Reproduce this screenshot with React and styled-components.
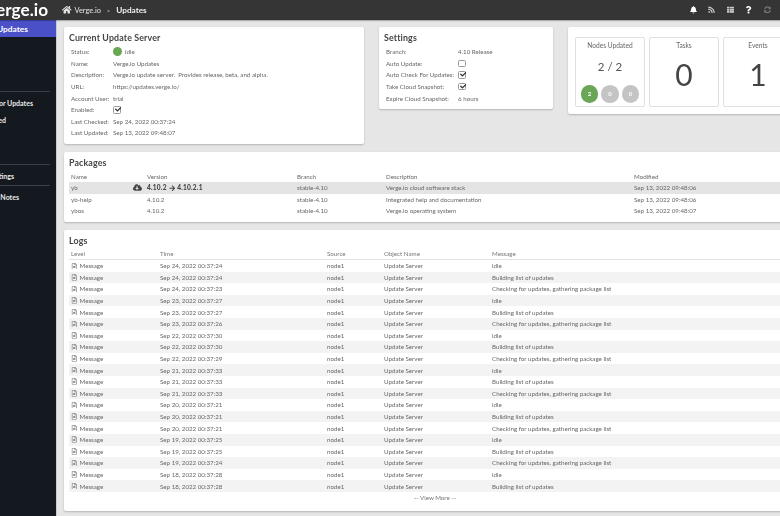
import React from 'react';
import styled, { createGlobalStyle } from 'styled-components';
import {
  FaHome, FaBell, FaRss, FaThList, FaQuestion, FaSyncAlt, FaCheck,
  FaCloudDownloadAlt, FaArrowRight, FaRegFileAlt,
} from 'react-icons/fa';

const GlobalStyle = createGlobalStyle`
  html, body {
    margin: 0;
    padding: 0;
    overflow: hidden;
    background: #e6e6e6;
    font-family: "Lato", "Open Sans", sans-serif;
    color: #666;
  }
`;

const Page = styled.div`
  width: 780px;
  height: 516px;
  overflow: hidden;
  display: flex;
  flex-direction: column;
  filter: blur(0.4px);
`;

const TopBar = styled.header`
  height: 20px;
  flex: none;
  background: #353535;
  box-shadow: 0 1px 1px rgba(0, 0, 0, 0.25);
  display: flex;
  align-items: center;
  color: #e4e4e4;
  position: relative;
  z-index: 1;
`;

const Logo = styled.div`
  width: 48px;
  margin-right: 14px;
  display: flex;
  justify-content: flex-end;
  overflow: hidden;
  white-space: nowrap;
  color: #fff;
  font-size: 17.2px;
  line-height: 20px;
  font-weight: 700;
`;

const Crumbs = styled.div`
  display: flex;
  align-items: center;
  font-size: 7.4px;
  gap: 3px;
  svg { font-size: 9.5px; margin-right: 0; }
`;

const CrumbSep = styled.span`
  margin: 0 3px;
  font-size: 6px;
  color: #ccc;
`;

const CrumbNow = styled.span`
  font-size: 8.2px;
  font-weight: 700;
  color: #f0f0f0;
`;

const TopIcons = styled.div`
  margin-left: auto;
  display: flex;
  align-items: center;
  gap: 11.6px;
  padding-right: 9px;
  font-size: 7.5px;
`;

const TopIcon = styled.span`
  display: flex;
  width: 7px;
  justify-content: center;
  color: ${(p) => (p.$dim ? '#777' : p.$soft ? '#c8c8c8' : '#fff')};
`;

const Body = styled.div`
  flex: 1;
  display: flex;
  min-height: 0;
`;

const Sidebar = styled.nav`
  width: 56px;
  flex: none;
  background: #14181f;
  color: #e8e8e8;
  font-size: 7px;
  font-weight: 700;
  overflow: hidden;
  border-right: 1px solid #c9c9d6;
`;

const NavGroup = styled.div`
  height: ${(p) => p.$height}px;
  margin-right: 6px;
  padding-top: ${(p) => p.$top || 0}px;
  box-sizing: border-box;
  border-bottom: ${(p) => (p.$line ? '1px solid #3c3f45' : 'none')};
`;

const NavItem = styled.div`
  height: 17px;
  margin-right: ${(p) => (p.$active ? '-6px' : '0')};
  background: ${(p) => (p.$active ? '#4a50c8' : 'transparent')};
  color: ${(p) => (p.$active ? '#fff' : '#e8e8e8')};
  font-size: ${(p) => (p.$active ? '8.4px' : 'inherit')};
  display: flex;
  align-items: center;
`;

const NavText = styled.span`
  width: ${(p) => p.$end}px;
  display: flex;
  justify-content: flex-end;
  white-space: nowrap;
`;

const Main = styled.main`
  width: 742px;
  flex: none;
  padding: 7px 0 0 7px;
  display: flex;
  flex-direction: column;
  gap: 8px;
`;

const TopRow = styled.div`
  display: flex;
  align-items: flex-start;
  gap: 15px;
`;

const Card = styled.section`
  background: #fff;
  border-radius: 2px;
  box-shadow: 0 1px 2px rgba(0, 0, 0, 0.22);
  box-sizing: border-box;
  width: ${(p) => (p.$width ? `${p.$width}px` : 'auto')};
  height: ${(p) => p.$height}px;
  padding: ${(p) => p.$pad || '4px 5px 0'};
  flex: none;
`;

const Title = styled.h2`
  margin: 0 0 1px;
  height: 13px;
  line-height: 13px;
  font-size: 8.8px;
  font-weight: 700;
  color: #444;
  letter-spacing: 0.15px;
`;

const Details = styled.div`
  margin-top: 2px;
  padding-left: 2px;
  display: grid;
  grid-template-columns: ${(p) => p.$label}px 1fr;
  grid-auto-rows: 11.6px;
  font-size: 6.2px;
  align-items: center;
`;

const Status = styled.span`
  display: flex;
  align-items: center;
  gap: 3px;
`;

const Dot = styled.i`
  width: 9px;
  height: 9px;
  border-radius: 50%;
  background: #69a655;
`;

const Check = styled.span`
  width: 5.5px;
  height: 5.5px;
  border: 1px solid #999;
  border-radius: 1.5px;
  background: #fff;
  position: relative;
  display: block;
  svg {
    position: absolute;
    left: 0.5px;
    top: -1px;
    font-size: 6.5px;
    color: #333;
  }
`;

const Tiles = styled.div`
  display: flex;
  gap: 4px;
`;

const Tile = styled.div`
  width: 70px;
  height: 70px;
  flex: none;
  box-sizing: border-box;
  border: 1px solid #e0e0e0;
  border-radius: 2px;
  display: flex;
  flex-direction: column;
  align-items: center;
  font-size: 6.6px;
  padding-top: 3px;
`;

const TileBig = styled.div`
  font-size: 30px;
  line-height: 32px;
  margin-top: 9px;
  color: #444;
`;

const TileRatio = styled.div`
  font-size: 11.5px;
  line-height: 14px;
  margin-top: 11px;
  color: #555;
`;

const Bubbles = styled.div`
  display: flex;
  gap: 3px;
  margin-top: 11px;
`;

const Bubble = styled.span`
  width: 17.5px;
  height: 17.5px;
  border-radius: 50%;
  background: ${(p) => (p.$on ? '#69a655' : '#c4c4c4')};
  color: #fff;
  font-size: 6px;
  font-weight: 700;
  display: flex;
  align-items: center;
  justify-content: center;
`;

const Row = styled.div`
  display: grid;
  grid-template-columns: ${(p) => p.$cols};
  height: ${(p) => p.$height || '11.6px'};
  align-items: center;
  padding-left: 2px;
  font-size: 6.2px;
  white-space: nowrap;
  background: ${(p) => p.$bg || 'transparent'};
  border-bottom: ${(p) => (p.$head ? '1px solid #e2e2e2' : 'none')};
  box-sizing: ${(p) => (p.$head ? 'border-box' : 'content-box')};
  color: ${(p) => (p.$head ? '#777' : '#666')};
`;

const Version = styled.span`
  display: flex;
  align-items: center;
  gap: 2px;
  position: relative;
  font-size: ${(p) => (p.$strong ? '6.5px' : 'inherit')};
  letter-spacing: ${(p) => (p.$strong ? '0.25px' : '0')};
  font-weight: ${(p) => (p.$strong ? 900 : 400)};
  color: ${(p) => (p.$strong ? '#444' : 'inherit')};
`;

const UpdateIcon = styled(FaCloudDownloadAlt)`
  position: absolute;
  left: -14px;
  font-size: 9px;
  color: #444;
`;

const Level = styled.span`
  display: flex;
  align-items: center;
  gap: 2px;
  svg { font-size: 6.5px; color: #777; }
`;

const ViewMore = styled.div`
  text-align: center;
  font-size: 6.2px;
  line-height: 11px;
  margin-top: 0.5px;
  color: #777;
`;

const pkgCols = '76px 150px 89px 248px 1fr';
const logCols = '89px 167px 57px 108px 1fr';

const packages = [
  { name: 'yb', branch: 'stable-4.10', desc: 'Verge.io cloud software stack', mod: 'Sep 13, 2022 09:48:06', update: true },
  { name: 'yb-help', version: '4.10.2', branch: 'stable-4.10', desc: 'Integrated help and documentation', mod: 'Sep 13, 2022 09:48:06' },
  { name: 'ybos', version: '4.10.2', branch: 'stable-4.10', desc: 'Verge.io operating system', mod: 'Sep 13, 2022 09:48:07' },
];

const idle = 'idle';
const build = 'Building list of updates';
const check = 'Checking for updates, gathering package list';

const logs = [
  ['Sep 24, 2022 00:37:24', idle],
  ['Sep 24, 2022 00:37:24', build],
  ['Sep 24, 2022 00:37:23', check],
  ['Sep 23, 2022 00:37:27', idle],
  ['Sep 23, 2022 00:37:27', build],
  ['Sep 23, 2022 00:37:26', check],
  ['Sep 22, 2022 00:37:30', idle],
  ['Sep 22, 2022 00:37:30', build],
  ['Sep 22, 2022 00:37:29', check],
  ['Sep 21, 2022 00:37:33', idle],
  ['Sep 21, 2022 00:37:33', build],
  ['Sep 21, 2022 00:37:33', check],
  ['Sep 20, 2022 00:37:21', idle],
  ['Sep 20, 2022 00:37:21', build],
  ['Sep 20, 2022 00:37:21', check],
  ['Sep 19, 2022 00:37:25', idle],
  ['Sep 19, 2022 00:37:25', build],
  ['Sep 19, 2022 00:37:24', check],
  ['Sep 18, 2022 00:37:28', idle],
  ['Sep 18, 2022 00:37:28', build],
];

function Checkbox({ checked }) {
  return <Check>{checked && <FaCheck />}</Check>;
}

export default function App() {
  return (
    <Page>
      <GlobalStyle />
      <TopBar>
        <Logo>Verge.io</Logo>
        <Crumbs>
          <FaHome />
          <span>Verge.io</span>
          <CrumbSep>&gt;</CrumbSep>
          <CrumbNow>Updates</CrumbNow>
        </Crumbs>
        <TopIcons>
          <TopIcon><FaBell /></TopIcon>
          <TopIcon $soft><FaRss /></TopIcon>
          <TopIcon $soft><FaThList /></TopIcon>
          <TopIcon><FaQuestion /></TopIcon>
          <TopIcon $dim><FaSyncAlt /></TopIcon>
        </TopIcons>
      </TopBar>
      <Body>
        <Sidebar>
          <NavGroup $height={72} $line>
            <NavItem $active><NavText $end={28}>Updates</NavText></NavItem>
          </NavGroup>
          <NavGroup $height={73} $top={2} $line>
            <NavItem><NavText $end={33}>Check for Updates</NavText></NavItem>
            <NavItem><NavText $end={6}>Last Updated</NavText></NavItem>
          </NavGroup>
          <NavGroup $height={21} $top={2} $line>
            <NavItem><NavText $end={14}>Settings</NavText></NavItem>
          </NavGroup>
          <NavGroup $height={21} $top={2}>
            <NavItem><NavText $end={19}>Release Notes</NavText></NavItem>
          </NavGroup>
        </Sidebar>
        <Main>
          <TopRow>
            <Card $width={300} $height={117}>
              <Title>Current Update Server</Title>
              <Details $label={42}>
                <span>Status:</span>
                <Status><Dot />idle</Status>
                <span>Name:</span>
                <span>Verge.io Updates</span>
                <span>Description:</span>
                <span>Verge.io update server.&nbsp; Provides release, beta, and alpha.</span>
                <span>URL:</span>
                <span>https://updates.verge.io/</span>
                <span>Account User:</span>
                <span>trial</span>
                <span>Enabled:</span>
                <Checkbox checked />
                <span>Last Checked:</span>
                <span>Sep 24, 2022 00:37:24</span>
                <span>Last Updated:</span>
                <span>Sep 13, 2022 09:48:07</span>
              </Details>
            </Card>
            <Card $width={174} $height={82}>
              <Title>Settings</Title>
              <Details $label={72}>
                <span>Branch:</span>
                <span>4.10 Release</span>
                <span>Auto Update:</span>
                <Checkbox />
                <span>Auto Check For Updates:</span>
                <Checkbox checked />
                <span>Take Cloud Snapshot:</span>
                <Checkbox checked />
                <span>Expire Cloud Snapshot:</span>
                <span>6 hours</span>
              </Details>
            </Card>
            <Card $width={230} $height={87} $pad="10px 0 0 7px">
              <Tiles>
                <Tile>
                  Nodes Updated
                  <TileRatio>2 / 2</TileRatio>
                  <Bubbles>
                    <Bubble $on>2</Bubble>
                    <Bubble>0</Bubble>
                    <Bubble>0</Bubble>
                  </Bubbles>
                </Tile>
                <Tile>Tasks<TileBig>0</TileBig></Tile>
                <Tile>Events<TileBig>1</TileBig></Tile>
              </Tiles>
            </Card>
          </TopRow>
          <Card $height={70}>
            <Title>Packages</Title>
            <Row $cols={pkgCols} $height="12px">
              <span>Name</span><span>Version</span><span>Branch</span><span>Description</span><span>Modified</span>
            </Row>
            {packages.map((p) => (
              <Row key={p.name} $cols={pkgCols} $bg={p.update ? '#e4e4e4' : undefined}>
                <span>{p.name}</span>
                {p.update ? (
                  <Version $strong>
                    <UpdateIcon />
                    4.10.2 <FaArrowRight /> 4.10.2.1
                  </Version>
                ) : (
                  <Version>{p.version}</Version>
                )}
                <span>{p.branch}</span>
                <span>{p.desc}</span>
                <span>{p.mod}</span>
              </Row>
            ))}
          </Card>
          <Card $height={281}>
            <Title>Logs</Title>
            <Row $cols={logCols} $head $height="12px">
              <span>Level</span><span>Time</span><span>Source</span><span>Object Name</span><span>Message</span>
            </Row>
            {logs.map(([time, message], i) => (
              <Row key={i} $cols={logCols} $bg={i % 2 ? '#f3f3f3' : undefined}>
                <Level><FaRegFileAlt />Message</Level>
                <span>{time}</span>
                <span>node1</span>
                <span>Update Server</span>
                <span>{message}</span>
              </Row>
            ))}
            <ViewMore>-- View More --</ViewMore>
          </Card>
        </Main>
      </Body>
    </Page>
  );
}
